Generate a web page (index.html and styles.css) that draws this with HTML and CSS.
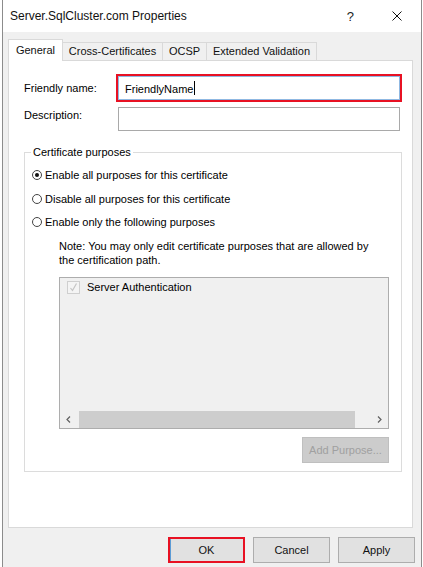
FILE: index.html
```html
<!DOCTYPE html>
<html>
<head>
<meta charset="utf-8">
<link rel="stylesheet" href="styles.css">
</head>
<body>
<div class="window">
  <div class="titlebar">
    <span class="title">Server.SqlCluster.com Properties</span>
    <span class="help">?</span>
    <svg class="close" width="10" height="10" viewBox="0 0 10 10"><path d="M0.5 0.5 L9.5 9.5 M9.5 0.5 L0.5 9.5" stroke="#111" stroke-width="1" fill="none"/></svg>
  </div>
  <div class="body">
    <div class="tabs">
      <div class="tab sel w-gen">General</div>
      <div class="tab w-cross">Cross-Certificates</div>
      <div class="tab w-ocsp">OCSP</div>
      <div class="tab w-ext">Extended Validation</div>
    </div>
    <div class="panel">
      <div class="row row1">
        <div class="label">Friendly name:</div>
        <div class="textbox focused"><span class="val">FriendlyName</span><span class="caret"></span></div>
      </div>
      <div class="row row2">
        <div class="label top">Description:</div>
        <div class="textbox"></div>
      </div>
      <fieldset class="group">
        <legend>Certificate purposes</legend>
        <div class="radio-row r1"><span class="radio checked"></span><span>Enable all purposes for this certificate</span></div>
        <div class="radio-row r2"><span class="radio"></span><span>Disable all purposes for this certificate</span></div>
        <div class="radio-row r3"><span class="radio"></span><span>Enable only the following purposes</span></div>
        <div class="inner">
          <div class="note">Note: You may only edit certificate purposes that are allowed by<br>the certification path.</div>
          <div class="listbox">
            <div class="items">
              <div class="item">
                <span class="check"><svg width="11" height="11" viewBox="0 0 11 11"><path d="M2.5 6 L4.5 8.5 L8.5 1.5" stroke="#c4c4c4" stroke-width="1.2" fill="none"/></svg></span>
                <span>Server Authentication</span>
              </div>
            </div>
            <div class="hscroll">
              <div class="arrow"><svg width="5" height="7" viewBox="0 0 5 7"><path d="M4 0.5 L1 3.5 L4 6.5" stroke="#606060" stroke-width="1.2" fill="none"/></svg></div>
              <div class="thumb"></div>
              <div class="track"></div>
              <div class="arrow"><svg width="5" height="7" viewBox="0 0 5 7"><path d="M1 0.5 L4 3.5 L1 6.5" stroke="#606060" stroke-width="1.2" fill="none"/></svg></div>
            </div>
          </div>
          <div class="add-row"><div class="btn disabled">Add Purpose...</div></div>
        </div>
      </fieldset>
    </div>
    <div class="footer">
      <div class="btn ok">OK</div>
      <div class="btn">Cancel</div>
      <div class="btn">Apply</div>
    </div>
  </div>
</div>
</body>
</html>
```
FILE: styles.css
```css
html, body {
  margin: 0;
  padding: 0;
  background: #ffffff;
}
body {
  font-family: "Liberation Sans", Arial, sans-serif;
  font-size: 11px;
  color: #000;
}
* { box-sizing: border-box; }

.window {
  margin-left: 2px;
  width: 420px;
  height: 567px;
  border-left: 1px solid #8c8c8c;
  border-right: 1px solid #8c8c8c;
  display: flex;
  flex-direction: column;
  overflow: hidden;
}

.titlebar {
  height: 32px;
  flex: none;
  background: #fff;
  display: flex;
  align-items: center;
  padding-left: 7px;
  padding-right: 19px;
}
.title {
  font-size: 12px;
  flex: 1;
  color: #111;
}
.help {
  font-size: 13px;
  color: #222;
  margin-right: 38px;
}
.close { display: block; }

.body {
  flex: 1;
  background: #f0f0f0;
  padding: 7px 6px 0 5px;
  display: flex;
  flex-direction: column;
}

.tabs {
  display: flex;
  align-items: flex-start;
  height: 21px;
  flex: none;
}
.tab {
  height: 18px;
  margin-top: 3px;
  border: 1px solid #d9d9d9;
  border-left: none;
  border-bottom: none;
  text-align: center;
  line-height: 17px;
  color: #111;
  background: #f0f0f0;
}
.tab.sel {
  height: 22px;
  margin-top: 0;
  background: #fff;
  line-height: 20px;
  border-left: 1px solid #d9d9d9;
  position: relative;
  z-index: 1;
}
.w-gen { width: 55px; }
.w-cross { width: 100px; }
.w-ocsp { width: 44px; }
.w-ext { width: 110px; }

.panel {
  height: 468px;
  flex: none;
  margin-right: 2px;
  border: 1px solid #d9d9d9;
  background: #fff;
}

.row {
  display: flex;
  align-items: center;
  margin-left: 15px;
}
.row1 { margin-top: 15px; }
.row2 { margin-top: 7px; align-items: flex-start; }
.label {
  width: 94px;
  line-height: 14px;
}
.label.top { padding-top: 1px; }
.textbox {
  width: 282px;
  height: 24px;
  border: 1px solid #a9a9a9;
  background: #fff;
  padding-left: 6px;
  display: flex;
  align-items: center;
}
.textbox.focused {
  border-color: #8fb8e2;
  box-shadow: 0 0 0 2px #e81123;
}
.val { line-height: 14px; padding-top: 1px; }
.caret {
  width: 1px;
  height: 14px;
  background: #000;
  margin-left: 1px;
}

.group {
  margin: 14px 0 0 15px;
  width: 378px;
  padding: 0 0 8px 0;
  border: 1px solid #dcdcdc;
  min-inline-size: 0;
}
.group legend {
  margin-left: 6px;
  padding: 0 2px;
  line-height: 14px;
  font-size: 11px;
}

.radio-row {
  display: flex;
  align-items: center;
  height: 14px;
  margin-left: 7px;
  gap: 3px;
}
.r1 { margin-top: 9px; }
.r2 { margin-top: 10px; }
.r3 { margin-top: 9px; }
.radio {
  width: 10px;
  height: 10px;
  border: 1px solid #444;
  border-radius: 50%;
  background: #fff;
  display: flex;
  align-items: center;
  justify-content: center;
}
.radio.checked::after {
  content: "";
  width: 4px;
  height: 4px;
  border-radius: 50%;
  background: #111;
}

.inner {
  padding: 0 12px 0 34px;
}
.note {
  margin-top: 10px;
  line-height: 14px;
}
.listbox {
  margin-top: 10px;
  height: 152px;
  border: 1px solid #adadad;
  background: #f0f0f0;
  display: flex;
  flex-direction: column;
}
.items { flex: 1; }
.item {
  display: flex;
  align-items: center;
  gap: 7px;
  padding: 2px 0 0 7px;
  line-height: 14px;
}
.check {
  width: 13px;
  height: 13px;
  border: 1px solid #cfcfcf;
  background: #f4f4f4;
  display: flex;
  align-items: center;
  justify-content: center;
}
.check svg { display: block; }
.hscroll {
  height: 17px;
  flex: none;
  display: flex;
  background: #f0f0f0;
}
.arrow {
  width: 17px;
  display: flex;
  align-items: center;
  justify-content: center;
}
.arrow svg { display: block; }
.thumb {
  width: 276px;
  margin-left: 2px;
  background: #cdcdcd;
}
.track { flex: 1; }

.add-row {
  display: flex;
  justify-content: flex-end;
  margin-top: 8px;
}
.btn {
  width: 77px;
  height: 26px;
  border: 1px solid #adadad;
  background: #e1e1e1;
  display: flex;
  align-items: center;
  justify-content: center;
  color: #111;
}
.btn.disabled {
  width: 87px;
  background: #cccccc;
  border-color: #bfbfbf;
  color: #a0a0a0;
}
.btn.ok {
  border: 2px solid #e81123;
  box-shadow: inset 1px 0 0 #5b9bd5;
}

.footer {
  display: flex;
  justify-content: flex-end;
  gap: 8px;
  margin-top: 9px;
}
```
